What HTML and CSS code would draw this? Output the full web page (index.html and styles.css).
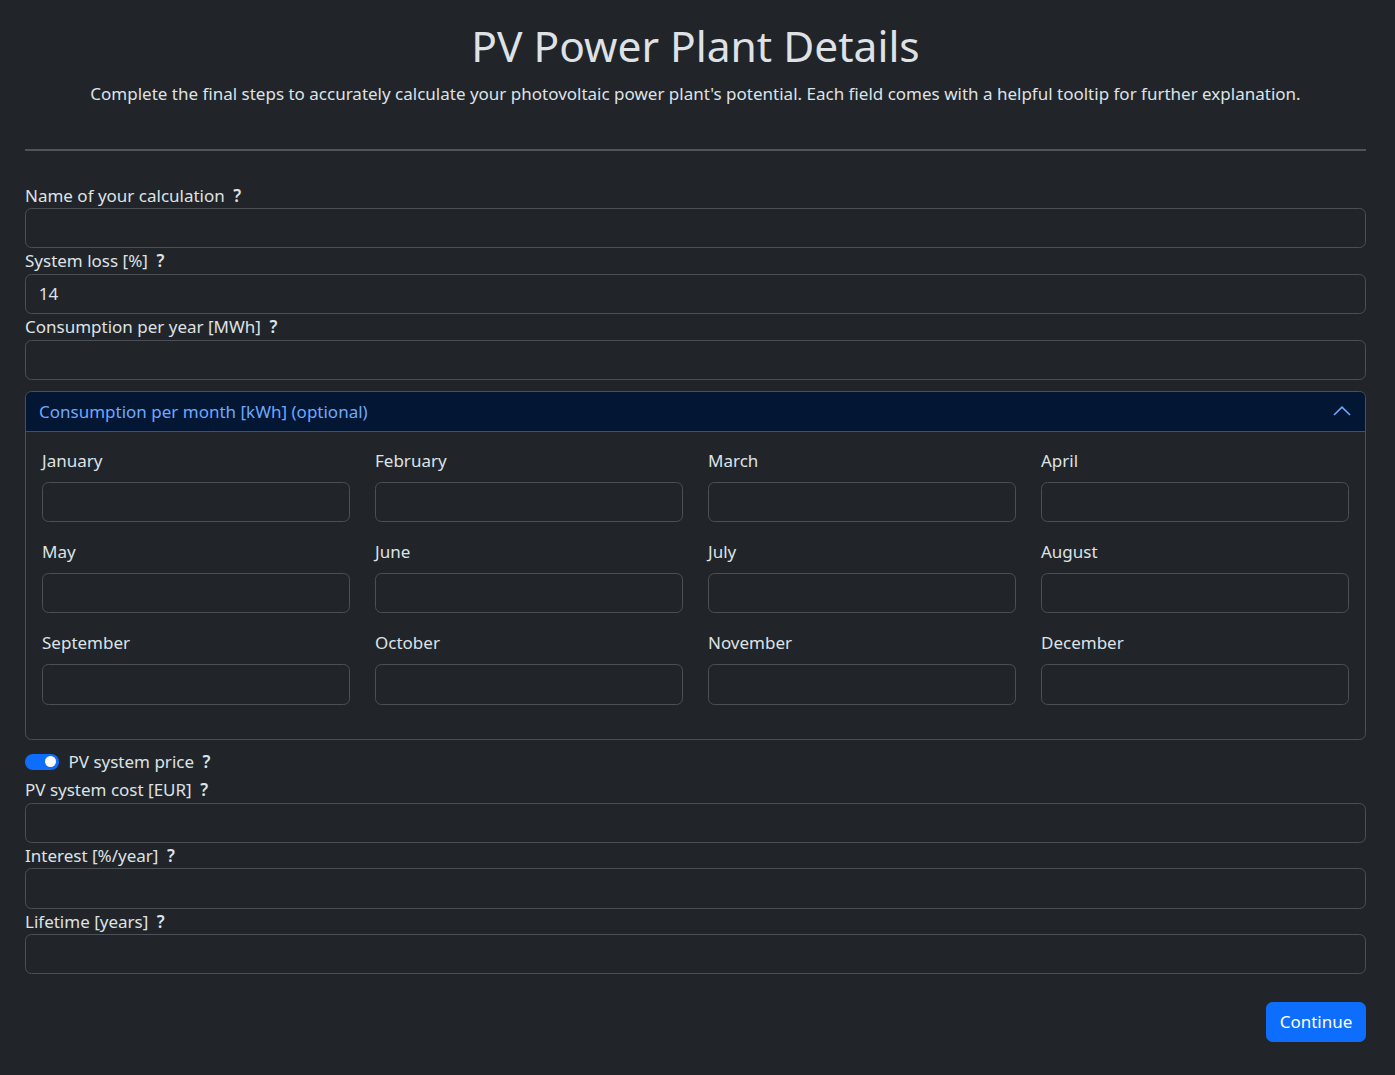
FILE: index.html
```html
<!DOCTYPE html>
<html lang="en">
<head>
<meta charset="utf-8">
<title>PV Power Plant Details</title>
<link rel="stylesheet" href="styles.css">
</head>
<body>
<main class="page">
  <header class="intro">
    <h1 class="title">PV Power Plant Details</h1>
    <p class="lead">Complete the final steps to accurately calculate your photovoltaic power plant's potential. Each field comes with a helpful tooltip for further explanation.</p>
  </header>
  <hr class="divider">
  <form class="form">
    <label class="field-label">Name of your calculation<span class="tip">?</span></label>
    <input class="control" type="text">
    <label class="field-label">System loss [%]<span class="tip">?</span></label>
    <input class="control" type="text" value="14">
    <label class="field-label">Consumption per year [MWh]<span class="tip">?</span></label>
    <input class="control" type="text">

    <section class="accordion">
      <div class="acc-head">
        <span>Consumption per month [kWh] (optional)</span>
        <svg class="chev" width="18" height="10" viewBox="0 0 18 10"><path d="M1 9 L9 1.2 L17 9" fill="none" stroke="#6ea8fe" stroke-width="1.6"/></svg>
      </div>
      <div class="acc-body">
        <div class="cell"><label class="m-label">January</label><input class="control" type="text"></div>
        <div class="cell"><label class="m-label">February</label><input class="control" type="text"></div>
        <div class="cell"><label class="m-label">March</label><input class="control" type="text"></div>
        <div class="cell"><label class="m-label">April</label><input class="control" type="text"></div>
        <div class="cell"><label class="m-label">May</label><input class="control" type="text"></div>
        <div class="cell"><label class="m-label">June</label><input class="control" type="text"></div>
        <div class="cell"><label class="m-label">July</label><input class="control" type="text"></div>
        <div class="cell"><label class="m-label">August</label><input class="control" type="text"></div>
        <div class="cell"><label class="m-label">September</label><input class="control" type="text"></div>
        <div class="cell"><label class="m-label">October</label><input class="control" type="text"></div>
        <div class="cell"><label class="m-label">November</label><input class="control" type="text"></div>
        <div class="cell"><label class="m-label">December</label><input class="control" type="text"></div>
      </div>
    </section>

    <div class="switch-row">
      <span class="switch"><span class="knob"></span></span>
      <span class="switch-text">PV system price<span class="tip">?</span></span>
    </div>
    <label class="field-label tight">PV system cost [EUR]<span class="tip">?</span></label>
    <input class="control" type="text">
    <label class="field-label">Interest [%/year]<span class="tip">?</span></label>
    <input class="control" type="text">
    <label class="field-label">Lifetime [years]<span class="tip">?</span></label>
    <input class="control" type="text">

    <div class="actions">
      <button type="button" class="btn">Continue</button>
    </div>
  </form>
</main>
</body>
</html>
```
FILE: styles.css
```css
html, body {
  margin: 0;
  padding: 0;
  background: #212529;
}
body {
  font-family: "Noto Sans", "Open Sans", sans-serif;
  color: #dee2e6;
  font-size: 17px;
  line-height: 25.5px;
}
.page {
  padding: 19.5px 29px 20px 25px;
}
.intro {
  text-align: center;
}
.title {
  margin: 0 0 10.5px;
  font-size: 42.5px;
  font-weight: 400;
  line-height: 51px;
}
.lead {
  margin: 0;
}
.divider {
  margin: 42.5px 0 0;
  border: 0;
  border-top: 2px solid #505458;
  height: 0;
}
.form {
  display: flex;
  flex-direction: column;
}
.field-label {
  display: block;
  height: 25.5px;
}
.form > .field-label:first-child {
  margin-top: 31.5px;
}
.field-label.tight {
  margin-top: 2.5px;
}
.tip {
  font-weight: 600;
  margin-left: 8.5px;
}
.control {
  box-sizing: border-box;
  width: 100%;
  height: 40.25px;
  background: #212529;
  border: 1px solid #495057;
  border-radius: 6.375px;
  color: #dee2e6;
  font-family: inherit;
  font-size: 17px;
  padding: 6.375px 12.75px;
  outline: none;
}
.accordion {
  margin-top: 11px;
  border: 1px solid #495057;
  border-radius: 6.375px;
  overflow: hidden;
}
.acc-head {
  display: flex;
  align-items: center;
  justify-content: space-between;
  height: 39px;
  padding: 0 14px 0 13px;
  background: #031633;
  color: #6ea8fe;
  border-bottom: 1px solid #495057;
}
.chev {
  display: block;
}
.acc-body {
  display: grid;
  grid-template-columns: repeat(4, 1fr);
  column-gap: 25px;
  row-gap: 17px;
  padding: 16px 16px 34px;
}
.cell {
  display: flex;
  flex-direction: column;
}
.m-label {
  display: block;
  height: 25.5px;
  margin-bottom: 8.5px;
}
.switch-row {
  display: flex;
  align-items: center;
  height: 25.5px;
  margin-top: 9.5px;
}
.switch {
  position: relative;
  width: 34px;
  height: 16px;
  border-radius: 8px;
  background: #0d6efd;
  margin-right: 9.5px;
}
.knob {
  position: absolute;
  top: 2.5px;
  right: 3.5px;
  width: 11px;
  height: 11px;
  border-radius: 50%;
  background: #fff;
}
.actions {
  display: flex;
  justify-content: flex-end;
  margin-top: 27.5px;
}
.btn {
  height: 40.25px;
  width: 100px;
  background: #0d6efd;
  border: 1px solid #0d6efd;
  border-radius: 6.375px;
  color: #fff;
  font-family: inherit;
  font-size: 17px;
  padding: 0;
}
```
